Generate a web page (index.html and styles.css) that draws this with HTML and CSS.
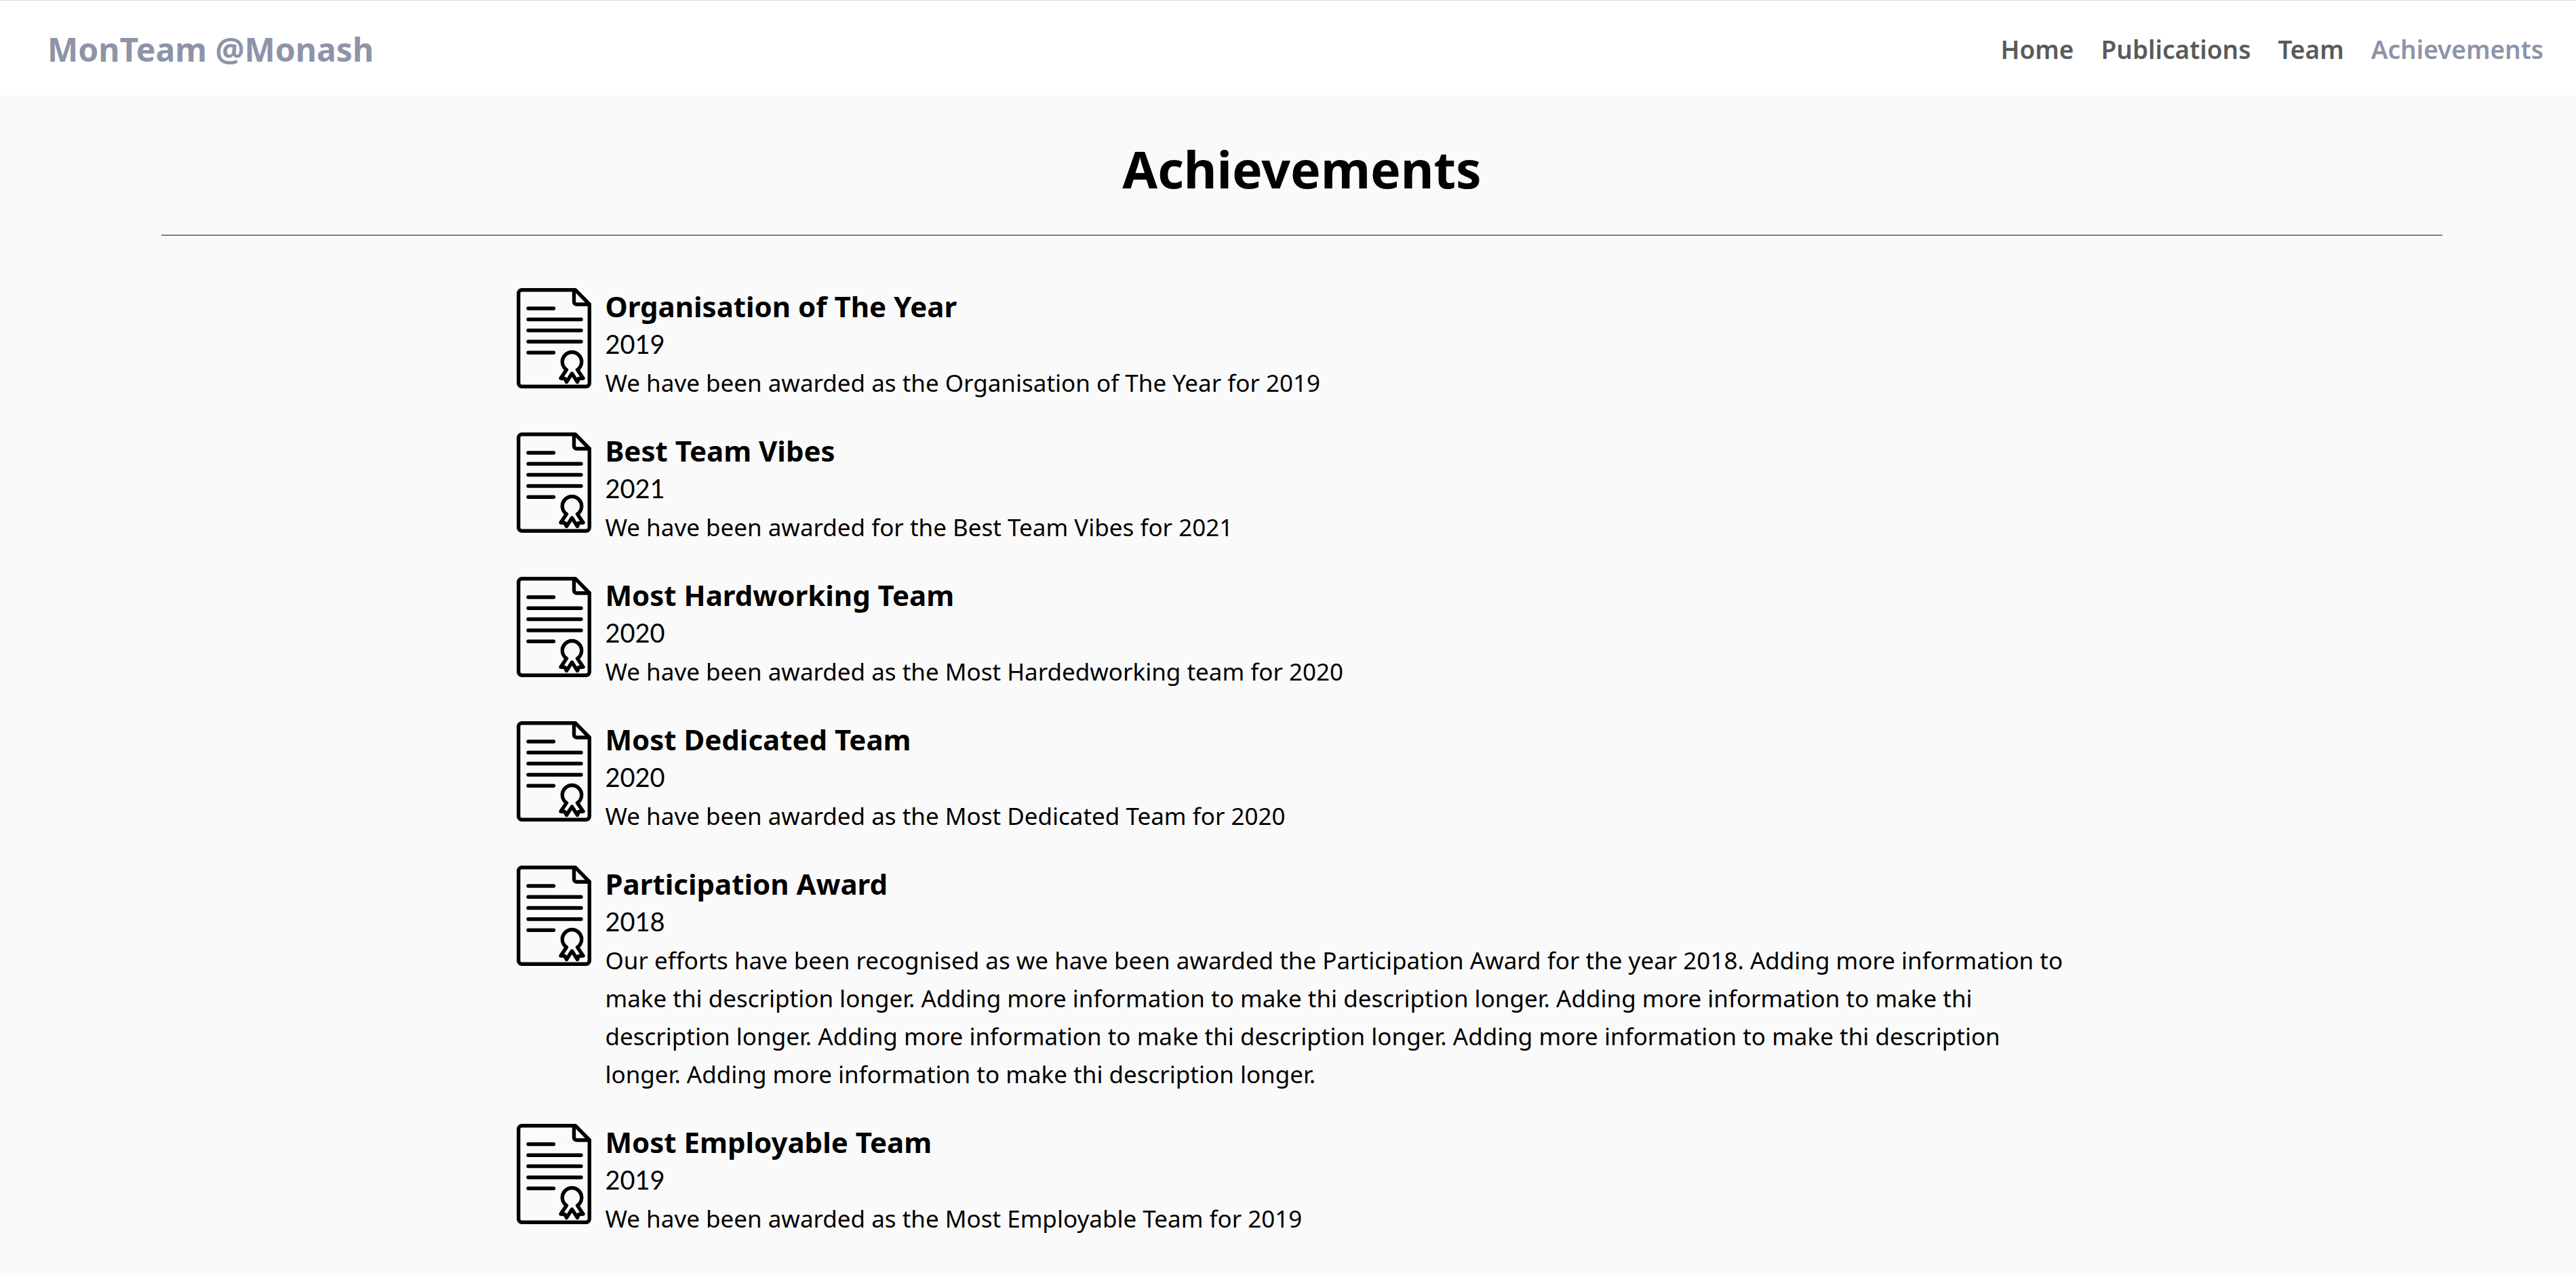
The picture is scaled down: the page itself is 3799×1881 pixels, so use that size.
FILE: index.html
```html
<!DOCTYPE html>
<html lang="en">
<head>
<meta charset="utf-8">
<title>Achievements - MonTeam @Monash</title>
<link rel="stylesheet" href="styles.css">
</head>
<body>
<svg class="sprite" aria-hidden="true">
  <symbol id="certificate" viewBox="0 0 110 148">
    <path d="M86.500 2.700H7.700a5 5 0 0 0-5 5V140.300a5 5 0 0 0 5 5H102.300a5 5 0 0 0 5-5V24Z"/>
    <path d="M84.500 3V20a4 4 0 0 0 4 4H107"/>
    <path d="M17 30H54.500M17 46.300H95M17 62.500H95M17 79H95M17 95.200H54.500"/>
    <path d="M73.500 120.500A14.200 14.200 0 1 1 89.500 120.500L98 133L91.500 133.500L89.500 138.500L81.500 126L73.500 138.500L71 133.500L65 133Z"/>
  </symbol>
</svg>
<header class="navbar">
  <a class="brand" href="#">MonTeam @Monash</a>
  <nav class="menu">
    <a href="#">Home</a>
    <a href="#">Publications</a>
    <a href="#">Team</a>
    <a class="active" href="#" aria-current="page">Achievements</a>
  </nav>
</header>
<main class="page">
  <h1>Achievements</h1>
  <hr>
  <ul class="awards">
    <li class="award">
      <svg class="icon" aria-hidden="true"><use href="#certificate"/></svg>
      <div class="details">
        <h2>Organisation of The Year</h2>
        <p class="year">2019</p>
        <p class="text">We have been awarded as the Organisation of The Year for 2019</p>
      </div>
    </li>
    <li class="award">
      <svg class="icon" aria-hidden="true"><use href="#certificate"/></svg>
      <div class="details">
        <h2>Best Team Vibes</h2>
        <p class="year">2021</p>
        <p class="text">We have been awarded for the Best Team Vibes for 2021</p>
      </div>
    </li>
    <li class="award">
      <svg class="icon" aria-hidden="true"><use href="#certificate"/></svg>
      <div class="details">
        <h2>Most Hardworking Team</h2>
        <p class="year">2020</p>
        <p class="text">We have been awarded as the Most Hardedworking team for 2020</p>
      </div>
    </li>
    <li class="award">
      <svg class="icon" aria-hidden="true"><use href="#certificate"/></svg>
      <div class="details">
        <h2>Most Dedicated Team</h2>
        <p class="year">2020</p>
        <p class="text">We have been awarded as the Most Dedicated Team for 2020</p>
      </div>
    </li>
    <li class="award">
      <svg class="icon" aria-hidden="true"><use href="#certificate"/></svg>
      <div class="details">
        <h2>Participation Award</h2>
        <p class="year">2018</p>
        <p class="text">Our efforts have been recognised as we have been awarded the Participation Award for the year 2018. Adding more information to make thi description longer. Adding more information to make thi description longer. Adding more information to make thi description longer. Adding more information to make thi description longer. Adding more information to make thi description longer. Adding more information to make thi description longer.</p>
      </div>
    </li>
    <li class="award">
      <svg class="icon" aria-hidden="true"><use href="#certificate"/></svg>
      <div class="details">
        <h2>Most Employable Team</h2>
        <p class="year">2019</p>
        <p class="text">We have been awarded as the Most Employable Team for 2019</p>
      </div>
    </li>
  </ul>
</main>
</body>
</html>
```
FILE: styles.css
```css
* {
  box-sizing: border-box;
}

body {
  margin: 0;
  background: #fafafa;
  color: #000;
  font-family: "Segoe UI", "Noto Sans", sans-serif;
  font-size: 35px;
  line-height: 56px;
}

.sprite {
  display: none;
}

.navbar {
  display: flex;
  align-items: center;
  justify-content: space-between;
  padding: 36px 48px 32px 70px;
  border-top: 1px solid #dadada;
  background: #fff;
}

.navbar a {
  text-decoration: none;
}

.brand {
  color: #8d94a8;
  font-size: 48px;
  font-weight: 700;
  line-height: 72px;
}

.menu {
  display: flex;
  gap: 40px;
  font-size: 37px;
  font-weight: 600;
}

.menu a {
  color: #5a5a5a;
}

.menu .active {
  color: #8d94a8;
}

.page {
  padding: 52px 197px 48px 238px;
}

h1 {
  margin: 0 0 41px;
  font-size: 75px;
  font-weight: 700;
  line-height: 112px;
  text-align: center;
}

hr {
  height: 2px;
  margin: 0 0 77px;
  border: 0;
  background: #808080;
}

.awards {
  display: flex;
  flex-direction: column;
  gap: 45px;
  width: 69%;
  margin: 0 auto;
  padding: 0 3px;
  list-style: none;
}

.award {
  display: flex;
  gap: 20px;
}

.icon {
  flex: none;
  width: 110px;
  height: 148px;
  fill: none;
  stroke: #000;
  stroke-width: 5.4;
  stroke-linecap: round;
  stroke-linejoin: round;
}

.details h2,
.details p {
  margin: 0;
}

.details h2 {
  font-size: 42px;
  font-weight: 700;
  line-height: 54px;
}

.details .year {
  font-family: Lato, sans-serif;
  font-size: 38px;
}

.details .text {
  margin-top: 2px;
  padding-right: 20px;
}
```
